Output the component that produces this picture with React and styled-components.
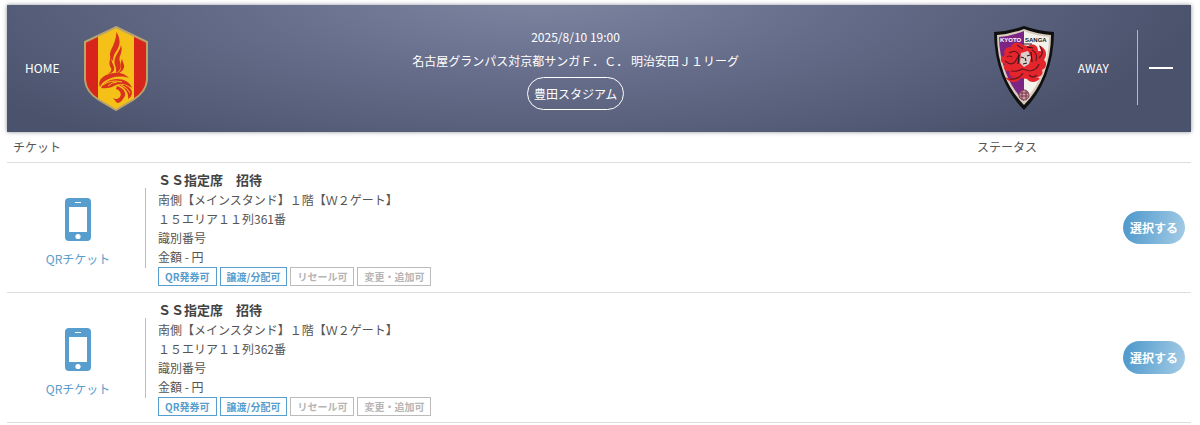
import React, { useState } from "react";
import styled, { createGlobalStyle, css } from "styled-components";

const GlobalStyle = createGlobalStyle`
  * { box-sizing: border-box; }
  body {
    margin: 0;
    background: #fff;
    color: #555;
    font-family: "Noto Sans CJK JP", "Liberation Sans", sans-serif;
    font-size: 12px;
    line-height: 19px;
  }
`;

const Page = styled.main`
  padding: 5px 9px 0 7px;
`;

const MatchHeader = styled.header`
  display: flex;
  align-items: center;
  min-height: 127px;
  padding: 0 8px 2px 18px;
  color: #fff;
  background: radial-gradient(ellipse 56% 150% at 45% -10%, #7f86a2 0%, #666d8a 45%, #4b526c 100%);
  box-shadow: 0 0 4px rgba(60, 66, 90, 0.6);
`;

const Team = styled.div`
  display: flex;
  align-items: center;
  gap: 24px;
  padding-right: ${(p) => (p.$away ? 28 : 8)}px;
`;

const MatchInfo = styled.div`
  flex: 1;
  display: flex;
  flex-direction: column;
  align-items: center;
  line-height: 24px;
  text-align: center;
`;

const MatchTitle = styled.h1`
  margin: 0 0 4px;
  font-size: 12px;
  font-weight: 400;
  line-height: 24px;
`;

const StadiumLink = styled.a`
  padding: 0 6px;
  border: 1px solid #fff;
  border-radius: 17px;
  color: inherit;
  line-height: 31px;
  text-decoration: none;
`;

const CollapseButton = styled.button`
  display: grid;
  place-items: center;
  width: 46px;
  height: 75px;
  padding: 0;
  border: 0;
  border-left: 1px solid #b5b8c5;
  background: none;
  color: #fff;
  cursor: pointer;
`;

const TicketTable = styled.table`
  width: 100%;
  border-collapse: collapse;
  table-layout: fixed;
`;

const HeadCell = styled.th`
  width: ${(p) => p.$width || "auto"};
  height: 30px;
  padding: 0 6px;
  border-bottom: 1px solid #ddd;
  font-weight: 400;
  text-align: left;
`;

const Cell = styled.td`
  padding: ${(p) => (p.$action ? "0 6px" : "7px 0 6px")};
  border-bottom: 1px solid #ddd;
  text-align: ${(p) => (p.$action ? "right" : "left")};
`;

const Ticket = styled.div`
  display: flex;
  align-items: center;
`;

const TicketKind = styled.div`
  display: flex;
  flex-direction: column;
  align-items: center;
  justify-content: flex-end;
  gap: 8px;
  width: 139px;
  height: 80px;
  padding-left: 4px;
  border-right: 1px solid #bbb;
  color: #579dcd;
`;

const Details = styled.div`
  padding-left: 12px;
`;

const SeatName = styled.h2`
  margin: 0;
  color: #444;
  font-size: 13px;
  font-weight: 700;
  line-height: 20px;
`;

const Line = styled.p`
  margin: 0;
`;

const Tags = styled.ul`
  display: flex;
  gap: 3px;
  margin: 1px 0 0;
  padding: 0;
  list-style: none;
`;

const Tag = styled.li`
  padding: 0 6px;
  border: 1px solid #bbb;
  color: #b5b5b5;
  font-size: 10px;
  font-weight: 700;
  line-height: 17px;
  ${(p) =>
    p.$active &&
    css`
      border-color: #579dcd;
      color: #579dcd;
    `}
`;

const SelectButton = styled.button`
  height: 33px;
  padding: 0 7px;
  border: 0;
  border-radius: 17px;
  background: linear-gradient(100deg, #549ccd 10%, #a4cce6 100%);
  color: #fff;
  font: inherit;
  font-weight: 700;
  cursor: pointer;
`;

const GrampusCrest = () => (
  <svg width="66" height="86" viewBox="0 0 66 86" role="img" aria-label="名古屋グランパス">
    <defs>
      <clipPath id="grampus-shield">
        <path d="M33 2 64 17V55Q63 67 50 75L33 85 16 75Q3 67 2 55V17Z" />
      </clipPath>
    </defs>
    <g clipPath="url(#grampus-shield)">
      <path fill="#d8251c" d="M0 0h66v86H0z" />
      <path fill="#f5c018" d="M15 0h36v86H15z" />
    </g>
    <path fill="none" stroke="#b9a36d" strokeWidth="2" d="M33 2 64 17V55Q63 67 50 75L33 85 16 75Q3 67 2 55V17Z" />
    <g fill="#d8331d">
      <path d="M33.5 7C33 14 31 19 28 25 26 30 27 33 30 36 30 31 32 28 34 25 38 19 37 13 33.5 7Z" />
      <path d="M38 20C37 26 32 30 31.5 36 31 40 34 42 33 48L36 46C40 40 36 37 36.500 33 37 30 40 26 38 20Z" />
      <path d="M29 28C27 34 25 39 28 43 29 46 27 47 25 49 29 48 32 46 31 42 30 38 27 36 29 28Z" />
      <path d="M39 34C37 38 39 41 37 46L33 49C38 48 42 44 41 40Z" />
      <path d="M17 62C14 54 22 49 31 48 38 47 43 50 46 53 37 50 28 52 22 56 19 58 18 60 17 62Z" />
      <path d="M18 63C20 58 27 54 34 54 41 54 47 57 49 63 43 59 38 58 33 60 30 61 28 64 18 63Z" />
      <path d="M36 60C42 59 48 62 49 67 49 71 47 73 45 74 46 69 43 63 36 60Z" />
      <path d="M34 61C41 63 45 69 40 74 38 77 36 78 34 78L30 73C33 75 35 74 37 72 39 69 37 65 33 64Z" />
    </g>
    <path fill="none" stroke="#f5c018" strokeWidth="1" d="M20 60Q28 54 39 57M25 61Q29 57 34 57M38 60Q45 63 47 68" />
  </svg>
);

const SangaCrest = () => (
  <svg width="60" height="84" viewBox="0 0 60 84" role="img" aria-label="京都サンガF.C.">
    <path fill="#101010" d="M30 0Q44 5 60 6 60 29 52 50 44 70 30 84 16 70 8 50 0 29 0 6 16 5 30 0Z" />
    <path fill="#d8ccbc" d="M30 3Q43 8 57 9 57 29 50 48 43 66 30 79 17 66 10 48 3 29 3 9 17 8 30 3Z" />
    <path fill="#7c2585" d="M30 5Q18 10 5 11 5 29 12 47 18 63 30 75Z" />
    <path fill="#f5f1eb" d="M30 5Q42 10 55 11 55 29 48 47 42 63 30 75Z" />
    <path fill="#e5252c" d="M29 19C23 15 18 17 17 21 11 20 9 26 11 29 5 31 6 37 11 38 8 42 11 46 16 45 14 49 17 52 21 50 16 53 13 52 11 51 15 57 23 58 27 52L33 53C36 57 43 57 46 52L41 51C46 52 50 48 48 44 53 42 53 36 50 34 53 30 53 24 48 21L45 19 47 25 44 25C44 19 39 17 34 20Z" />
    <path fill="none" stroke="#681620" strokeWidth="1.200" d="M15 27Q22 23 25 29L21 36Q17 40 11 35M17 45Q24 46 28 43L36 45Q43 44 45 38M38 24Q44 27 42 35M46 20Q51 27 45 32M15 53Q25 54 29 47M35 49Q39 53 43 49M18 31Q15 29 13 31M23 19 29 23" />
    <path fill="#dccfcb" d="M27 27 34 25 37 31 35 38 30 41 26 37Z" />
    <path fill="none" stroke="#24181a" strokeWidth="1.200" d="m27 31 3 1m3-2 3-1m-5 3 1 3m-3 3 4-1M25 29l-1 9M37 26l1 10M30 18h8M33 21l6 1" />
    <circle cx="30" cy="69" r="5" fill="#d1a19b" stroke="#753552" />
    <path fill="none" stroke="#753552" strokeWidth="1" d="M26 67h8m-8 3h8m-6-5v8m4-8v8" />
    <g fontFamily="Liberation Sans, sans-serif" fontSize="6" fontWeight="700">
      <text x="6" y="16" fill="#fff">KYOTO</text>
      <text x="31" y="16" fill="#181818">SANGA</text>
    </g>
  </svg>
);

const PhoneIcon = () => (
  <svg width="26" height="43" viewBox="0 0 26 43" aria-hidden="true">
    <rect width="26" height="43" rx="4" fill="currentColor" />
    <path fill="#fff" d="M4 9h18v25H4zM10 4h6v1h-6z" />
    <circle cx="13" cy="38.5" r="2.6" fill="#fff" />
  </svg>
);

const tickets = [{ seat: "361" }, { seat: "362" }];

const tags = [
  { label: "QR発券可", active: true },
  { label: "譲渡/分配可", active: true },
  { label: "リセール可", active: false },
  { label: "変更・追加可", active: false },
];

function TicketRow({ seat }) {
  return (
    <tr>
      <Cell>
        <Ticket>
          <TicketKind>
            <PhoneIcon />
            <span>QRチケット</span>
          </TicketKind>
          <Details>
            <SeatName>ＳＳ指定席　招待</SeatName>
            <Line>南側【メインスタンド】１階【Ｗ２ゲート】</Line>
            <Line>１５エリア１１列{seat}番</Line>
            <Line>識別番号</Line>
            <Line>金額 - 円</Line>
            <Tags>
              {tags.map((tag) => (
                <Tag key={tag.label} $active={tag.active}>{tag.label}</Tag>
              ))}
            </Tags>
          </Details>
        </Ticket>
      </Cell>
      <Cell $action>
        <SelectButton type="button">選択する</SelectButton>
      </Cell>
    </tr>
  );
}

export default function App() {
  const [open, setOpen] = useState(true);
  return (
    <>
      <GlobalStyle />
      <Page>
        <MatchHeader>
          <Team>
            <span>HOME</span>
            <GrampusCrest />
          </Team>
          <MatchInfo>
            <time dateTime="2025-08-10T19:00">2025/8/10 19:00</time>
            <MatchTitle>名古屋グランパス対京都サンガＦ．Ｃ． 明治安田Ｊ１リーグ</MatchTitle>
            <StadiumLink href="#stadium">豊田スタジアム</StadiumLink>
          </MatchInfo>
          <Team $away>
            <SangaCrest />
            <span>AWAY</span>
          </Team>
          <CollapseButton type="button" aria-label="開閉" aria-expanded={open} onClick={() => setOpen(!open)}>
            <svg width="24" height="24" viewBox="0 0 24 24" aria-hidden="true">
              <path d={open ? "M0 12h24" : "M0 12h24M12 0v24"} stroke="currentColor" strokeWidth="2" />
            </svg>
          </CollapseButton>
        </MatchHeader>
        {open && (
          <TicketTable>
            <thead>
              <tr>
                <HeadCell scope="col">チケット</HeadCell>
                <HeadCell scope="col" $width="220px">ステータス</HeadCell>
              </tr>
            </thead>
            <tbody>
              {tickets.map((ticket) => (
                <TicketRow key={ticket.seat} seat={ticket.seat} />
              ))}
            </tbody>
          </TicketTable>
        )}
      </Page>
    </>
  );
}
